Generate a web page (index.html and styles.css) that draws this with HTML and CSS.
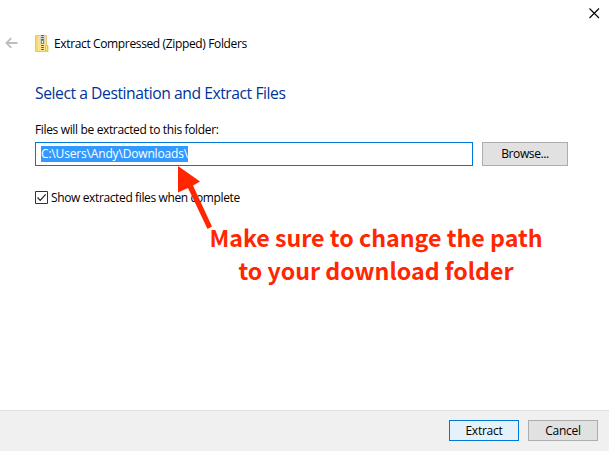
FILE: index.html
```html
<!DOCTYPE html>
<html lang="en">
<head>
<meta charset="utf-8">
<title>Extract Compressed (Zipped) Folders</title>
<link rel="stylesheet" href="styles.css">
</head>
<body>
<div class="wizard">
  <header class="titlebar">
    <svg class="close" width="11" height="11" viewBox="0 0 11 11"><path d="M.5.5l9.500 9.500M10 .5L.5 10" stroke="#000" stroke-width="1.1" fill="none"/></svg>
  </header>
  <div class="caption">
    <svg class="back" width="13" height="12" viewBox="0 0 13 12"><path d="M12.500 6H1.500M6.200 1.200L1.400 6l4.800 4.800" stroke="#bdbdbd" stroke-width="1.8" fill="none"/></svg>
    <svg class="zip" width="14" height="17" viewBox="0 0 14 17">
      <path d="M.5.5h11v10h1.500v6H.5z" fill="#fbe28b" stroke="#e8c968"/>
      <path d="M1 1h2v15H1z" fill="#f5d775"/>
      <path d="M10.500 10.500h2v5h-2z" fill="#ffe99d" stroke="#e3bf58"/>
      <path d="M5 0h5v9H5z" fill="#d2d3d2"/>
      <path d="M7.500 0v16" stroke="#555" stroke-width="2.600" stroke-dasharray="1 1"/>
      <path d="M6 5h3v4H6z" fill="#888"/><path d="M7 6h1v2H7z" fill="#eee"/>
    </svg>
    <span class="title">Extract Compressed (Zipped) Folders</span>
  </div>
  <main class="content">
    <h1>Select a Destination and Extract Files</h1>
    <label class="label"><span>Files will be extracted to this folder:</span></label>
    <div class="row">
      <div class="field"><span class="selection">C:\Users\Andy\Downloads\</span></div>
      <button class="button browse"><span>Browse...</span></button>
    </div>
    <div class="check">
      <svg class="box" width="13" height="13" viewBox="0 0 13 13"><path d="M.5.5h12v12H.5z" fill="#fff" stroke="#333"/><path d="M2.500 6.500l2.700 2.800 5.500-6" fill="none" stroke="#222" stroke-width="1.200"/></svg>
      <span>Show extracted files when complete</span>
    </div>
  </main>
  <footer class="actions">
    <button class="button primary"><span>Extract</span></button>
    <button class="button cancel"><span>Cancel</span></button>
  </footer>
  <svg class="arrow" width="40" height="70" viewBox="0 0 40 70"><path d="M1 1L23 16.500 16 20.500 35 61.500 30.500 64 11 23 1 27.500z" fill="#ff2600"/></svg>
  <div class="note"><div class="one">Make sure to change the path</div><div class="two">to your download folder</div></div>
</div>
</body>
</html>
```
FILE: styles.css
```css
* { box-sizing: border-box; }
body { margin: 0; background: #fff; color: #000; font: 12px/16px "Open Sans", "Noto Sans", sans-serif; }
.wizard { position: relative; display: flex; flex-direction: column; width: 609px; height: 451px; overflow: hidden; }
.titlebar { display: flex; justify-content: flex-end; height: 34px; padding: 8px 9px 0 0; }
.caption { display: flex; align-items: center; height: 19px; padding-left: 5px; }
.back { position: relative; top: -1px; }
.zip { margin-left: 17px; }
.title { margin-left: 5px; letter-spacing: -.36px; white-space: nowrap; }
.content { flex: 1; padding: 29px 0 0 35px; }
h1 { margin: 0; font-size: 15.700px; line-height: 22px; font-weight: 400; color: #003399; letter-spacing: -.45px; white-space: nowrap; }
.label { display: block; margin-top: 18px; letter-spacing: -.35px; }
.row { display: flex; align-items: flex-start; gap: 9px; margin-top: 4px; }
.field { display: flex; align-items: center; width: 438px; height: 24px; border: 1px solid #0078d7; padding-left: 5px; }
.selection { height: 16px; color: #fff; background: #3399ff; letter-spacing: -.17px; }
.button { display: flex; align-items: center; justify-content: center; height: 24px; padding: 0; border: 1px solid #adadad; background: #e1e1e1; color: #000; font: inherit; letter-spacing: -.38px; }
.browse { width: 86px; }
.check { display: flex; align-items: center; gap: 3px; height: 16px; margin-top: 24px; letter-spacing: -.37px; }
.box { margin-bottom: 1px; }
.actions { display: flex; gap: 9px; justify-content: flex-end; height: 41px; padding: 9px 11px 0 0; border-top: 1px solid #dfdfdf; background: #f0f0f0; }
.actions .button { width: 70px; height: 21px; letter-spacing: -.25px; }
.actions .primary { border-color: #0078d7; background: #e5f1fb; }
.arrow { position: absolute; left: 177px; top: 165px; }
.note { position: absolute; left: 209px; top: 221px; width: 334px; color: #ff2600; font: 700 23.200px/33px "Noto Sans CJK SC", sans-serif; text-align: center; white-space: nowrap; }
```
